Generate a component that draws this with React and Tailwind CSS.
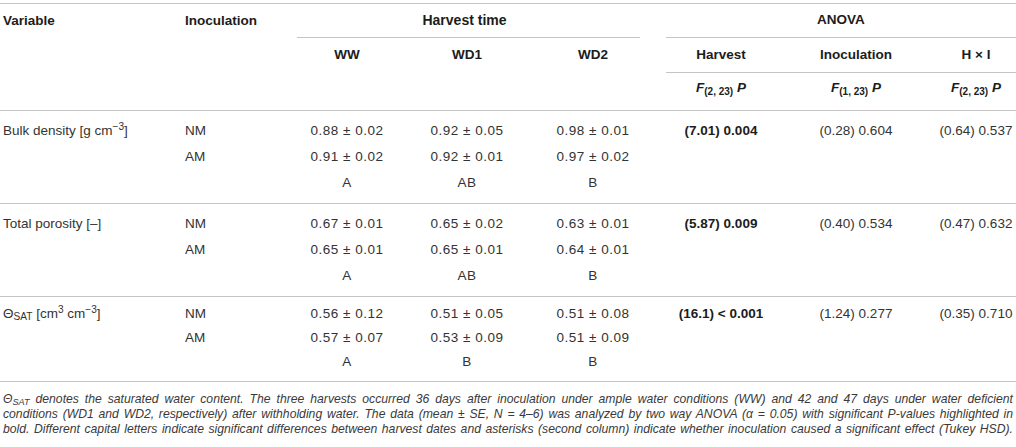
const LINE = 'border-[#c4c4c4]'

const GROUPS = [
  {
    label: <>Bulk density [g cm<sup>−3</sup>]</>,
    rows: [
      ['NM', '0.88 ± 0.02', '0.92 ± 0.05', '0.98 ± 0.01'],
      ['AM', '0.91 ± 0.02', '0.92 ± 0.01', '0.97 ± 0.02'],
      ['', 'A', 'AB', 'B'],
    ],
    anova: ['(7.01) 0.004', '(0.28) 0.604', '(0.64) 0.537'],
    pad: 'py-[7px]',
    rowH: 'h-[26px]',
  },
  {
    label: <>Total porosity [–]</>,
    rows: [
      ['NM', '0.67 ± 0.01', '0.65 ± 0.02', '0.63 ± 0.01'],
      ['AM', '0.65 ± 0.01', '0.65 ± 0.01', '0.64 ± 0.01'],
      ['', 'A', 'AB', 'B'],
    ],
    anova: ['(5.87) 0.009', '(0.40) 0.534', '(0.47) 0.632'],
    pad: 'py-[7px]',
    rowH: 'h-[26px]',
  },
  {
    label: <>Θ<sub>SAT</sub> [cm<sup>3</sup> cm<sup>−3</sup>]</>,
    rows: [
      ['NM', '0.56 ± 0.12', '0.51 ± 0.05', '0.51 ± 0.08'],
      ['AM', '0.57 ± 0.07', '0.53 ± 0.09', '0.51 ± 0.09'],
      ['', 'A', 'B', 'B'],
    ],
    anova: ['(16.1) < 0.001', '(1.24) 0.277', '(0.35) 0.710'],
    pad: 'pt-[5px] pb-[7px]',
    rowH: 'h-[24px]',
  },
]

export default function App() {
  return (
    <div
      className="w-[1016px] h-[447px] bg-white pt-[3px] text-[13.5px] text-[#333]"
      style={{ fontFamily: '"Liberation Sans", Arial, sans-serif' }}
    >
      <Header />
      {GROUPS.map((g, i) => (
        <Group key={i} group={g} />
      ))}
      <Caption />
    </div>
  )
}

// ─── Header ──────────────────────────────────────────────────────────────────

function Header() {
  return (
    <div className={`flex border-t border-b ${LINE} font-bold text-[#1c1c1c]`}>
      <div className="flex w-[297px] items-start">
        <div className="w-[185px] h-[34px] pl-[3px] flex items-center">Variable</div>
        <div className="w-[112px] h-[34px] flex items-center">Inoculation</div>
      </div>

      <div className="flex flex-col">
        <div className="flex h-[34px]">
          <div className="w-[352px] pr-[9px]">
            <div className={`h-full border-b ${LINE} flex items-center justify-center pr-[8px] text-[14px]`}>
              Harvest time
            </div>
          </div>
          <div className="w-[17px]" />
          <div className={`w-[350px] border-b ${LINE} flex items-center justify-center`}>ANOVA</div>
        </div>

        <div className="flex h-[35px]">
          <div className="w-[100px] flex items-center justify-center">WW</div>
          <div className="w-[140px] flex items-center justify-center">WD1</div>
          <div className="w-[112px] flex items-center justify-center">WD2</div>
          <div className="w-[17px]" />
          <div className={`w-[350px] flex border-b ${LINE}`}>
            <div className="w-[110px] flex items-center justify-center">Harvest</div>
            <div className="w-[160px] flex items-center justify-center">Inoculation</div>
            <div className="w-[80px] flex items-center justify-center">H × I</div>
          </div>
        </div>

        <div className="flex h-[37px]">
          <div className="w-[369px]" />
          <div className="w-[110px] pt-[5px] text-center"><FStat a="2" /></div>
          <div className="w-[160px] pt-[5px] text-center"><FStat a="1" /></div>
          <div className="w-[80px] pt-[5px] text-center"><FStat a="2" /></div>
        </div>
      </div>
    </div>
  )
}

function FStat({ a }) {
  return (
    <span>
      <i>F</i>
      <sub className="text-[10px]">({a}, 23)</sub> <i>P</i>
    </span>
  )
}

// ─── Body ────────────────────────────────────────────────────────────────────

function Group({ group }) {
  const { label, rows, anova, pad, rowH } = group
  return (
    <div className={`border-b ${LINE} ${pad}`}>
      {rows.map((r, i) => (
        <div key={i} className={`flex items-center ${rowH}`}>
          <div className="w-[185px] pl-[3px] whitespace-nowrap">{i === 0 ? label : ''}</div>
          <div className="w-[112px]">{r[0]}</div>
          <div className="w-[100px] text-center tracking-[0.5px]">{r[1]}</div>
          <div className="w-[140px] text-center tracking-[0.5px]">{r[2]}</div>
          <div className="w-[112px] text-center tracking-[0.5px]">{r[3]}</div>
          <div className="w-[17px]" />
          <div className="w-[110px] text-center font-bold text-[#1c1c1c] whitespace-nowrap">
            {i === 0 ? anova[0] : ''}
          </div>
          <div className="w-[160px] text-center">{i === 0 ? anova[1] : ''}</div>
          <div className="w-[80px] text-center whitespace-nowrap">{i === 0 ? anova[2] : ''}</div>
        </div>
      ))}
    </div>
  )
}

// ─── Caption ─────────────────────────────────────────────────────────────────

function Caption() {
  const line = 'whitespace-nowrap text-justify [text-align-last:justify]'
  return (
    <div className="pt-[10px] px-[3px] italic text-[12.2px] leading-[15px] text-[#3a3a3a]">
      <div className={line}>
        Θ<sub>SAT</sub> denotes the saturated water content. The three harvests occurred 36 days after
        inoculation under ample water conditions (WW) and 42 and 47 days under water deficient
      </div>
      <div className={line}>
        conditions (WD1 and WD2, respectively) after withholding water. The data (mean ± SE, N = 4–6) was
        analyzed by two way ANOVA (α = 0.05) with significant P-values highlighted in
      </div>
      <div className={line}>
        bold. Different capital letters indicate significant differences between harvest dates and asterisks
        (second column) indicate whether inoculation caused a significant effect (Tukey HSD).
      </div>
    </div>
  )
}
